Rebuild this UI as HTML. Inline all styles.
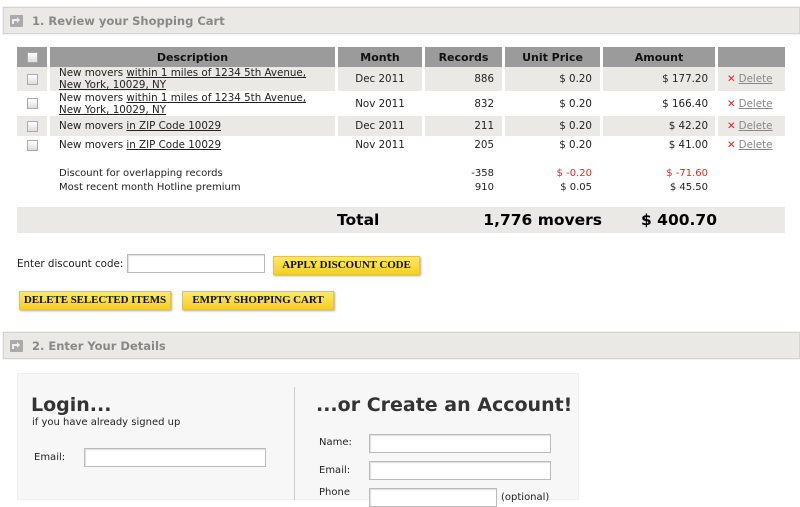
<!DOCTYPE html>
<html><head><meta charset="utf-8"><style>
*{box-sizing:border-box;margin:0;padding:0}
body{width:800px;height:500px;overflow:hidden;background:#fff;font-family:"DejaVu Sans","Liberation Sans",sans-serif;font-size:10.3px;color:#222;position:relative}
.abs{position:absolute}
.sec{position:absolute;left:3px;width:797px;height:27px;background:#ebe9e5;border:1px solid #d4d4d4;box-shadow:0 0 0 1px #f3f3f3}
.sec svg{position:absolute;left:6px;top:7px}
.sec .t{position:absolute;left:28px;top:6px;font-weight:bold;font-size:11.5px;color:#888}
.cell{position:absolute;display:flex;align-items:center}
.hd{background:#9b9b9b;font-weight:bold;font-size:11px;justify-content:center;color:#111;height:20px;top:47px}
.cb{width:11px;height:11px;border:1px solid #aaa;background:linear-gradient(#fff,#ddd)}
u{text-decoration:underline}
.r{justify-content:flex-end}
.btn{position:absolute;height:19px;background:linear-gradient(#ffe869,#f6cf22);border:1px solid #e6c240;box-shadow:1px 1px 2px #aaa;font-family:"Liberation Serif",serif;font-weight:900;font-size:11px;text-align:center;line-height:17px;color:#111;letter-spacing:-0.1px;transform-origin:left}
.inp{position:absolute;height:19px;border:1px solid #bbb;background:#fff;box-shadow:inset 1px 1px 1px #ddd}
.del{color:#888;text-decoration:underline}
.x{color:#e22;font-weight:bold;margin-right:3px}
</style></head><body>
<div class="sec" style="top:7px"><svg width="13" height="12" viewBox="0 0 13 12"><rect width="13" height="12" rx="1" fill="#aaa"/><path d="M3 9V5h5" stroke="#eee" stroke-width="2" fill="none"/><path d="M7 2l3 3-3 3z" fill="#eee"/></svg><div class="t">1. Review your Shopping Cart</div></div>

<div class="cell hd" style="left:17px;width:30px"><div class="cb"></div></div>
<div class="cell hd" style="left:50px;width:285px">Description</div>
<div class="cell hd" style="left:338px;width:84px">Month</div>
<div class="cell hd" style="left:425px;width:77px">Records</div>
<div class="cell hd" style="left:505px;width:95px">Unit Price</div>
<div class="cell hd" style="left:603px;width:112px">Amount</div>
<div class="cell hd" style="left:718px;width:67px"></div>

<div class="abs" style="left:17px;top:67px;width:768px;height:24px;background:#ebe9e5"></div>
<div class="abs" style="left:17px;top:116px;width:768px;height:20px;background:#ebe9e5"></div>
<div class="abs" style="left:47px;top:67px;width:3px;height:88px;background:#fff"></div>
<div class="abs" style="left:335px;top:67px;width:3px;height:88px;background:#fff"></div>
<div class="abs" style="left:422px;top:67px;width:3px;height:88px;background:#fff"></div>
<div class="abs" style="left:502px;top:67px;width:3px;height:88px;background:#fff"></div>
<div class="abs" style="left:600px;top:67px;width:3px;height:88px;background:#fff"></div>
<div class="abs" style="left:715px;top:67px;width:3px;height:88px;background:#fff"></div>

<div class="cell" style="left:17px;top:67px;width:30px;height:24px;justify-content:center"><div class="cb"></div></div>
<div class="abs" style="left:59px;top:67px;line-height:12px">New movers <u>within 1 miles of 1234 5th Avenue,</u><br><u>New York, 10029, NY</u></div>
<div class="cell" style="left:338px;top:67px;width:84px;height:24px;justify-content:center">Dec 2011</div>
<div class="cell r" style="left:425px;top:67px;width:69px;height:24px">886</div>
<div class="cell r" style="left:505px;top:67px;width:87px;height:24px">$ 0.20</div>
<div class="cell r" style="left:603px;top:67px;width:105px;height:24px">$ 177.20</div>
<div class="cell" style="left:727px;top:67px;height:24px"><span class="x">✕</span><span class="del">Delete</span></div>

<div class="cell" style="left:17px;top:91px;width:30px;height:25px;justify-content:center"><div class="cb"></div></div>
<div class="abs" style="left:59px;top:92px;line-height:12px">New movers <u>within 1 miles of 1234 5th Avenue,</u><br><u>New York, 10029, NY</u></div>
<div class="cell" style="left:338px;top:91px;width:84px;height:25px;justify-content:center">Nov 2011</div>
<div class="cell r" style="left:425px;top:91px;width:69px;height:25px">832</div>
<div class="cell r" style="left:505px;top:91px;width:87px;height:25px">$ 0.20</div>
<div class="cell r" style="left:603px;top:91px;width:105px;height:25px">$ 166.40</div>
<div class="cell" style="left:727px;top:91px;height:25px"><span class="x">✕</span><span class="del">Delete</span></div>

<div class="cell" style="left:17px;top:116px;width:30px;height:20px;justify-content:center"><div class="cb"></div></div>
<div class="cell" style="left:59px;top:116px;height:20px">New movers&nbsp;<u>in ZIP Code 10029</u></div>
<div class="cell" style="left:338px;top:116px;width:84px;height:20px;justify-content:center">Dec 2011</div>
<div class="cell r" style="left:425px;top:116px;width:69px;height:20px">211</div>
<div class="cell r" style="left:505px;top:116px;width:87px;height:20px">$ 0.20</div>
<div class="cell r" style="left:603px;top:116px;width:105px;height:20px">$ 42.20</div>
<div class="cell" style="left:727px;top:116px;height:20px"><span class="x">✕</span><span class="del">Delete</span></div>

<div class="cell" style="left:17px;top:136px;width:30px;height:18px;justify-content:center"><div class="cb"></div></div>
<div class="cell" style="left:59px;top:136px;height:18px">New movers&nbsp;<u>in ZIP Code 10029</u></div>
<div class="cell" style="left:338px;top:136px;width:84px;height:18px;justify-content:center">Nov 2011</div>
<div class="cell r" style="left:425px;top:136px;width:69px;height:18px">205</div>
<div class="cell r" style="left:505px;top:136px;width:87px;height:18px">$ 0.20</div>
<div class="cell r" style="left:603px;top:136px;width:105px;height:18px">$ 41.00</div>
<div class="cell" style="left:727px;top:136px;height:18px"><span class="x">✕</span><span class="del">Delete</span></div>

<div class="abs" style="left:59px;top:167px;font-size:10px;line-height:14px">Discount for overlapping records<br>Most recent month Hotline premium</div>
<div class="abs" style="left:425px;top:167px;width:69px;text-align:right;font-size:10px;line-height:14px">-358<br>910</div>
<div class="abs" style="left:505px;top:167px;width:87px;text-align:right;font-size:10px;line-height:14px"><span style="color:#e22">$ -0.20</span><br>$ 0.05</div>
<div class="abs" style="left:603px;top:167px;width:105px;text-align:right;font-size:10px;line-height:14px"><span style="color:#e22">$ -71.60</span><br>$ 45.50</div>

<div class="abs" style="left:17px;top:207px;width:768px;height:26px;background:#ebe9e5"></div>
<div class="abs" style="left:337px;top:211px;font-weight:bold;font-size:15.5px;color:#000">Total</div>
<div class="abs" style="left:440px;width:162px;text-align:right;top:211px;font-weight:bold;font-size:15.5px;color:#000">1,776 movers</div>
<div class="abs" style="left:600px;width:117px;text-align:right;top:211px;font-weight:bold;font-size:15.5px;color:#000">$ 400.70</div>

<div class="abs" style="left:17px;top:258px">Enter discount code:</div>
<div class="inp" style="left:127px;top:254px;width:138px"></div>
<div class="btn" style="left:273px;top:256px;width:147px">APPLY DISCOUNT CODE</div>
<div class="btn" style="left:19px;top:291px;width:152px">DELETE SELECTED ITEMS</div>
<div class="btn" style="left:182px;top:291px;width:152px">EMPTY SHOPPING CART</div>

<div class="sec" style="top:332px"><svg width="13" height="12" viewBox="0 0 13 12"><rect width="13" height="12" rx="1" fill="#aaa"/><path d="M3 9V5h5" stroke="#eee" stroke-width="2" fill="none"/><path d="M7 2l3 3-3 3z" fill="#eee"/></svg><div class="t">2. Enter Your Details</div></div>

<div class="abs" style="left:17px;top:373px;width:562px;height:127px;background:#f7f7f7;border:1px solid #f0f0f0"></div>
<div class="abs" style="left:294px;top:387px;width:1px;height:113px;background:#ccc"></div>
<div class="abs" style="left:31px;top:394px;font-weight:bold;font-size:19px;color:#333">Login...</div>
<div class="abs" style="left:32px;top:417px;font-size:10px">if you have already signed up</div>
<div class="abs" style="left:34px;top:452px;font-size:10px">Email:</div>
<div class="inp" style="left:84px;top:448px;width:182px"></div>
<div class="abs" style="left:316px;top:394px;font-weight:bold;font-size:19px;color:#333">...or Create an Account!</div>
<div class="abs" style="left:319px;top:437px;font-size:10px">Name:</div>
<div class="inp" style="left:369px;top:434px;width:182px"></div>
<div class="abs" style="left:319px;top:465px;font-size:10px">Email:</div>
<div class="inp" style="left:369px;top:461px;width:182px"></div>
<div class="abs" style="left:319px;top:487px;font-size:10px">Phone</div>
<div class="inp" style="left:369px;top:488px;width:128px"></div>
<div class="abs" style="left:501px;top:492px;font-size:10px">(optional)</div>
</body></html>
